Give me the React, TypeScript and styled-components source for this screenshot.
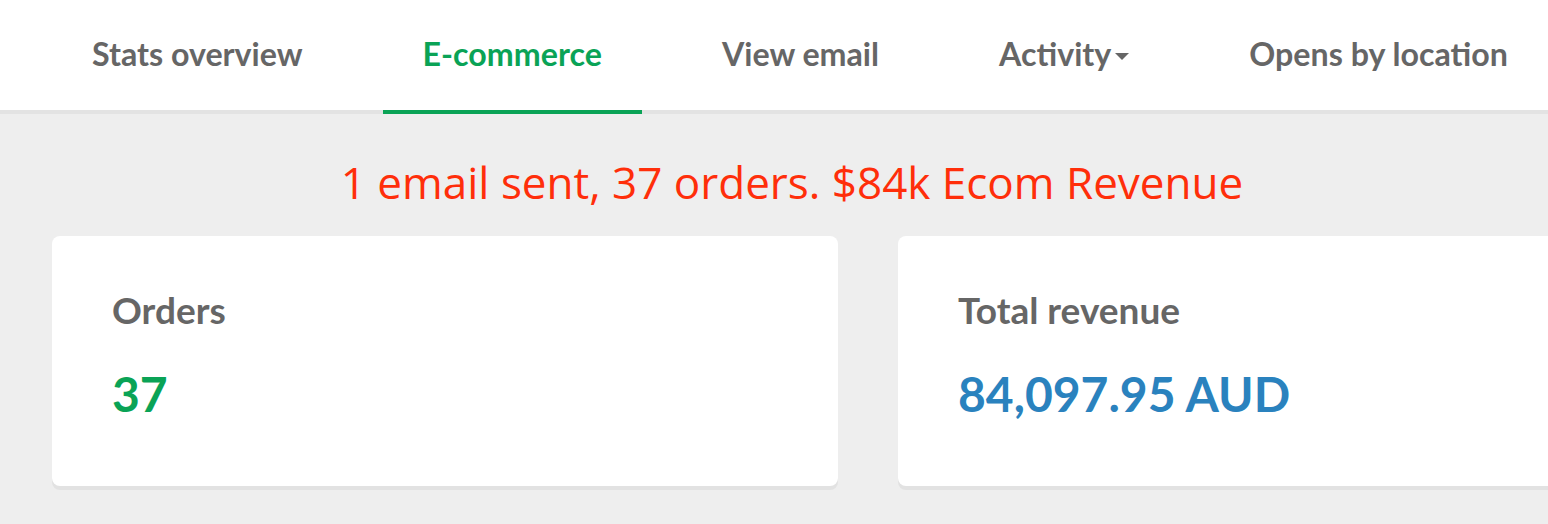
import React from "react";
import styled, { createGlobalStyle } from "styled-components";

const GlobalStyle = createGlobalStyle`
	html, body {
		margin: 0;
		padding: 0;
		background: #eeeeee;
		overflow: hidden;
	}
	body {
		font-family: "Lato", "Noto Sans", sans-serif;
	}
`;

const Page = styled.div`
	width: 1548px;
	height: 524px;
	overflow: hidden;
	background: #eeeeee;
`;

const TabBar = styled.nav`
	display: flex;
	gap: 40px;
	height: 110px;
	padding-left: 52px;
	background: #ffffff;
	border-bottom: 4px solid #e3e3e3;
	white-space: nowrap;
`;

const Tab = styled.a<{ $active?: boolean }>`
	display: flex;
	align-items: center;
	padding: 0 40px 3px;
	margin-bottom: -4px;
	border-bottom: 4px solid ${(p) => (p.$active ? "#0aa356" : "transparent")};
	font-size: 32.2px;
	font-weight: 700;
	color: ${(p) => (p.$active ? "#0aa356" : "#666666")};
	text-decoration: none;
	cursor: pointer;
`;

const Caret = styled.span`
	display: inline-block;
	margin-left: 4px;
	margin-top: 6px;
	border-left: 7px solid transparent;
	border-right: 7px solid transparent;
	border-top: 7px solid #666666;
`;

const Headline = styled.h2`
	margin: 0;
	padding: 44px 0 30px 36px;
	text-align: center;
	font-family: "Open Sans", sans-serif;
	font-weight: 400;
	font-size: 44px;
	line-height: 48px;
	color: #ff2e0a;
	white-space: nowrap;
`;

const CardRow = styled.div`
	display: flex;
	gap: 60px;
	padding-left: 52px;
`;

const Card = styled.section`
	flex: 0 0 786px;
	height: 250px;
	box-sizing: border-box;
	padding: 54px 60px 0;
	background: #ffffff;
	border-radius: 8px;
	box-shadow: 0 4px 0 #e2e2e2;
`;

const Label = styled.div`
	font-size: 37px;
	font-weight: 700;
	line-height: 40px;
	color: #666666;
`;

const Value = styled.div<{ $color: string }>`
	margin-top: 39px;
	font-size: 48px;
	font-weight: 700;
	line-height: 50px;
	color: ${(p) => p.$color};
`;

const tabs = ["Stats overview", "E-commerce", "View email", "Activity", "Opens by location"];

export default function App() {
	return (
		<Page>
			<GlobalStyle />
			<TabBar>
				{tabs.map((t) => (
					<Tab key={t} $active={t === "E-commerce"}>
						{t}
						{t === "Activity" && <Caret />}
					</Tab>
				))}
			</TabBar>
			<Headline>1 email sent, 37 orders. $84k Ecom Revenue</Headline>
			<CardRow>
				<Card>
					<Label>Orders</Label>
					<Value $color="#0aa356">37</Value>
				</Card>
				<Card>
					<Label>Total revenue</Label>
					<Value $color="#2a82be">84,097.95 AUD</Value>
				</Card>
			</CardRow>
		</Page>
	);
}
